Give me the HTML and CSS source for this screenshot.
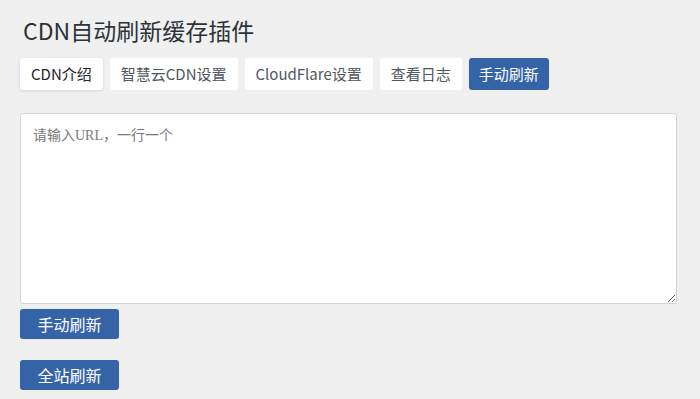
FILE: index.html
```html
<!DOCTYPE html>
<html lang="zh-CN">
<head>
<meta charset="utf-8">
<link rel="stylesheet" href="styles.css">
</head>
<body>
<div class="wrap">
  <h1 class="title">CDN自动刷新缓存插件</h1>
  <nav class="tabs">
    <span class="tab tab-first">CDN介绍</span>
    <span class="tab">智慧云CDN设置</span>
    <span class="tab">CloudFlare设置</span>
    <span class="tab">查看日志</span>
    <span class="tab tab-active">手动刷新</span>
  </nav>
  <textarea class="urls" placeholder="请输入URL，一行一个"></textarea>
  <button class="btn btn-refresh">手动刷新</button>
  <button class="btn btn-all">全站刷新</button>
</div>
</body>
</html>
```

FILE: styles.css
```css
html, body {
  margin: 0;
  padding: 0;
  background: #f0f0f1;
}
body {
  font-family: "Noto Sans CJK SC", "Noto Sans", sans-serif;
  color: #1d2327;
}
.wrap {
  padding: 14px 23px 0 20px;
  display: flex;
  flex-direction: column;
  align-items: flex-start;
}
.title {
  margin: 0 0 0 3px;
  font-size: 23px;
  line-height: 32px;
  font-weight: 400;
  color: #2c3338;
}
.tabs {
  display: flex;
  gap: 7px;
  margin-top: 12px;
}
.tab {
  display: block;
  height: 32px;
  box-sizing: border-box;
  padding: 0 11px;
  font-size: 15px;
  line-height: 32px;
  background: #fff;
  border-radius: 3px;
  color: #50575e;
}
.tab-first {
  color: #1d2327;
  box-shadow: 0 1px 3px rgba(0, 0, 0, 0.12);
}
.tab-active {
  background: #3563a7;
  color: #fff;
  padding: 0 10px;
}
.urls {
  margin-top: 23px;
  width: 657px;
  height: 191px;
  box-sizing: border-box;
  border: 1px solid #d3d4d6;
  border-radius: 3px;
  padding: 10px 12px;
  font-family: "Liberation Serif", "Noto Sans CJK SC", serif;
  font-size: 14px;
  background: #fff;
}
.urls::placeholder {
  color: #7a7a7a;
}
.btn {
  width: 99px;
  height: 30px;
  border: 0;
  border-radius: 3px;
  background: #3563a7;
  color: #fff;
  font-family: "Noto Sans CJK SC", sans-serif;
  font-size: 16px;
  line-height: 30px;
  padding: 0;
}
.btn-refresh {
  margin-top: 5px;
}
.btn-all {
  margin-top: 21px;
}
```
